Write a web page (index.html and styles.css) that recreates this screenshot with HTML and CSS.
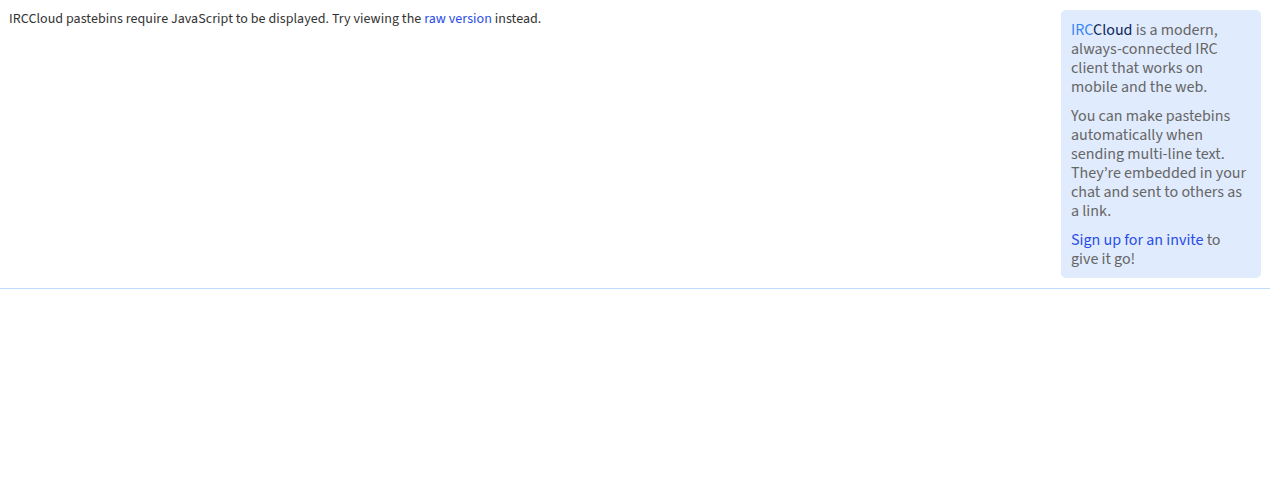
FILE: index.html
```html
<!DOCTYPE html>
<html lang="en">
<head>
<meta charset="utf-8">
<title>IRCCloud pastebin</title>
<link rel="stylesheet" href="styles.css">
</head>
<body>
<div class="page">
  <main class="notice">
    IRCCloud pastebins require JavaScript to be displayed. Try viewing the <a href="#" class="link">raw version</a> instead.
  </main>
  <aside class="promo">
    <p><span class="brand-irc">IRC</span><span class="brand-cloud">Cloud</span> is a modern, always-connected IRC client that works on mobile and the web.</p>
    <p>You can make pastebins automatically when sending multi-line text. They’re embedded in your chat and sent to others as a link.</p>
    <p><a href="#" class="link">Sign up for an invite</a> to give it go!</p>
  </aside>
</div>
</body>
</html>
```
FILE: styles.css
```css
html, body {
  margin: 0;
  padding: 0;
  background: #fff;
}

body {
  font-family: "Source Sans Pro", "Source Sans 3", Lato, "Noto Sans", sans-serif;
}

.page {
  width: 1270px;
  box-sizing: border-box;
  display: flex;
  justify-content: space-between;
  align-items: flex-start;
  padding: 10px 9px 10px 9px;
  border-bottom: 1px solid #bedcfb;
}

.notice {
  font-size: 14px;
  line-height: 18px;
  letter-spacing: 0.045px;
  color: #333;
}

.link {
  color: #2a4de6;
  text-decoration: none;
}

.promo {
  width: 200px;
  box-sizing: border-box;
  padding: 11px 10px 9px;
  background: #e0ebfd;
  border-radius: 5px;
  color: #666;
  font-size: 16px;
  line-height: 19px;
}

.promo p {
  margin: 0 0 10px;
}

.promo p:last-child {
  margin-bottom: 0;
}

.brand-irc {
  color: #3a86f3;
}

.brand-cloud {
  color: #0c2659;
}
```
